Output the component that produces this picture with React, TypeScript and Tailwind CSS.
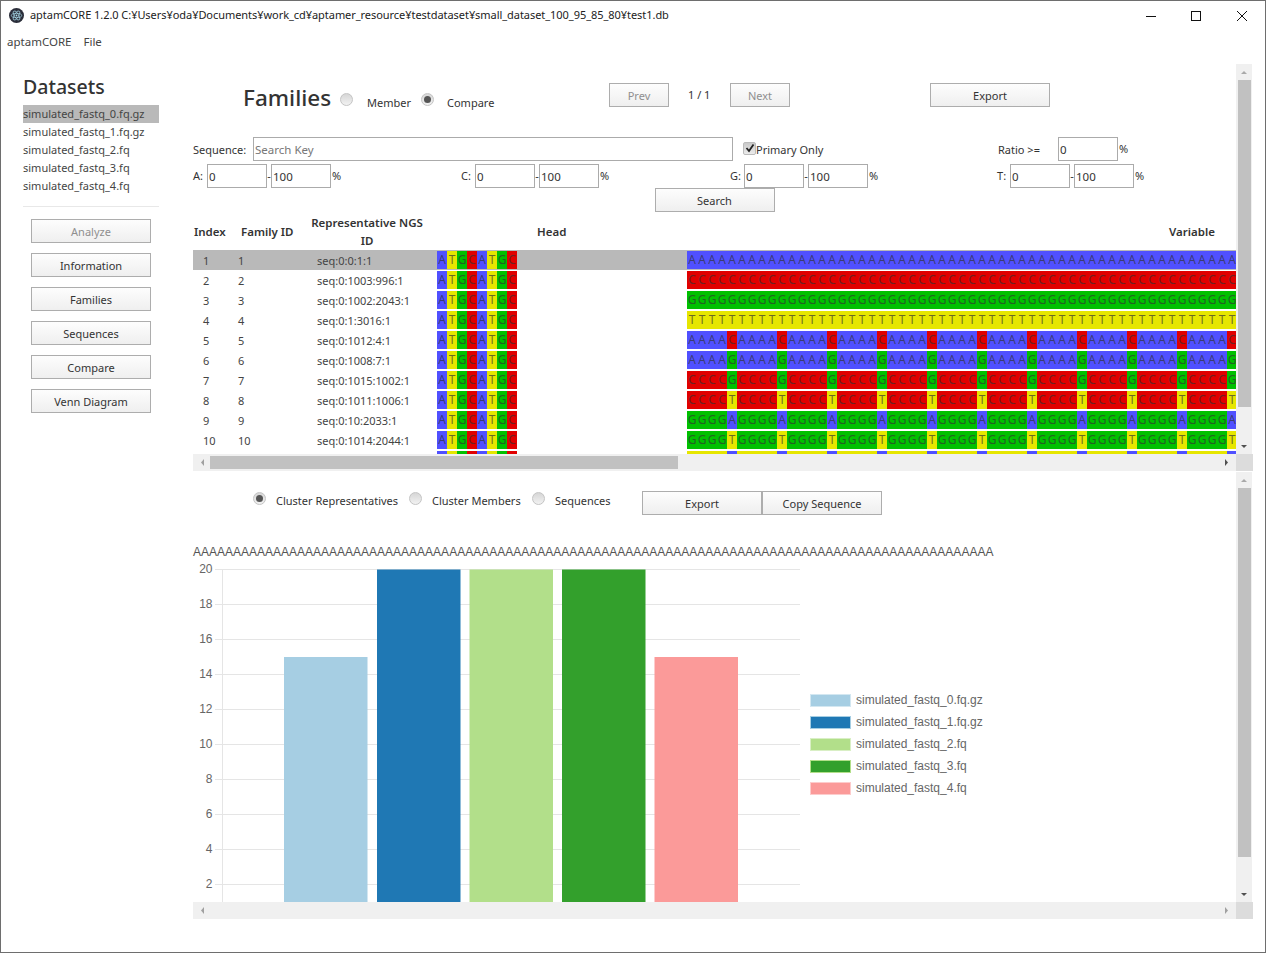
import React from "react";

const FONT = "font-['Noto_Sans','Open_Sans',sans-serif]";
const COL: Record<string, string> = { A: "bg-[#5050ff]", T: "bg-[#e6e600]", G: "bg-[#00c000]", C: "bg-[#e00000]" };

function Btn({ label, w = "w-[120px]", disabled = false }: { label: string; w?: string; disabled?: boolean }) {
  return (
    <div className={`${w} h-6 shrink-0 flex items-center justify-center pt-[2px] border border-[#adadad] bg-gradient-to-b from-[#fdfdfd] to-[#efefef] text-[11px] ${disabled ? "text-[#8f8f8f]" : "text-[#333]"}`}>
      {label}
    </div>
  );
}
function Field({ value, w = "w-[60px]", ph = false }: { value: string; w?: string; ph?: boolean }) {
  return (
    <div className={`${w} h-6 shrink-0 border border-[#ababab] bg-white pl-[1px] pt-px flex items-center text-[11.5px] ${ph ? "text-[#777]" : "text-[#333]"}`}>
      {value}
    </div>
  );
}
function Radio({ on = false, className = "" }: { on?: boolean; className?: string }) {
  return (
    <div className={`w-[13px] h-[13px] shrink-0 rounded-full border border-[#c4c4c4] bg-gradient-to-b from-[#d6d6d6] to-[#f2f2f2] flex items-center justify-center ${className}`}>
      {on && <div className="w-[7px] h-[7px] rounded-full bg-[#555]" />}
    </div>
  );
}
function Range({ letter, labelW }: { letter: string; labelW: string }) {
  return (
    <div className="flex items-center text-[11px] text-[#333]">
      <span className={labelW}>{letter}:</span>
      <Field value="0" />
      <span className="w-1 text-center">-</span>
      <Field value="100" />
      <span className="ml-px">%</span>
    </div>
  );
}
function Seq({ s, w }: { s: string; w: number }) {
  const cells = Array.from({ length: w }, (_, i) => s[i % s.length]);
  return (
    <div className="flex h-[18px] shrink-0">
      {cells.map((c, i) => (
        <span key={i} className={`w-[10px] h-[18px] shrink-0 flex items-center justify-center text-xs text-[#333]/70 ${COL[c]}`}>
          {c}
        </span>
      ))}
    </div>
  );
}
const ROWS: [string, string][] = [
  ["seq:0:0:1:1", "A"],
  ["seq:0:1003:996:1", "C"],
  ["seq:0:1002:2043:1", "G"],
  ["seq:0:1:3016:1", "T"],
  ["seq:0:1012:4:1", "AAAAC"],
  ["seq:0:1008:7:1", "AAAAG"],
  ["seq:0:1015:1002:1", "CCCCG"],
  ["seq:0:1011:1006:1", "CCCCT"],
  ["seq:0:10:2033:1", "GGGGA"],
  ["seq:0:1014:2044:1", "GGGGT"],
  ["seq:0:1013:2045:1", "TTTTA"],
];
function Row({ i, id, v }: { i: number; id: string; v: string }) {
  return (
    <div className={`flex items-center h-5 shrink-0 text-[11px] text-[#444] ${i === 1 ? "bg-[#b9b9b9]" : ""}`}>
      <span className="w-[45px] shrink-0 pl-[10px] pt-[2px]">{i}</span>
      <span className="w-[79px] shrink-0 pt-[2px]">{i}</span>
      <span className="w-[120px] shrink-0 pt-[2px]">{id}</span>
      <Seq s="ATGCATGC" w={8} />
      <div className="w-[170px] shrink-0" />
      <Seq s={v} w={55} />
    </div>
  );
}
function VScroll({ thumbH }: { thumbH: string }) {
  return (
    <div className="flex-1 w-4 bg-[#f0f0f0] flex flex-col items-center">
      <svg width="16" height="16" className="shrink-0"><path d="M5 10 L8 7 L11 10 Z" fill="#a9a9a9" /></svg>
      <div className={`w-[13px] bg-[#c1c1c1] ${thumbH}`} />
      <div className="flex-1" />
      <svg width="16" height="16" className="shrink-0"><path d="M5 7 L8 10 L11 7 Z" fill="#505050" /></svg>
    </div>
  );
}
function HScroll({ thumb = false }: { thumb?: boolean }) {
  return (
    <div className="h-[17px] bg-[#f0f0f0] flex items-center shrink-0">
      <svg width="17" height="17" className="shrink-0"><path d="M11 5 L8 8.5 L11 12 Z" fill="#a0a0a0" /></svg>
      {thumb && <div className="w-[468px] h-[13px] bg-[#c1c1c1]" />}
      <div className="flex-1" />
      <svg width="17" height="17" className="shrink-0"><path d="M6 5 L9 8.5 L6 12 Z" fill={thumb ? "#505050" : "#a0a0a0"} /></svg>
    </div>
  );
}
const BARS = [
  { x: 284, v: 15, c: "#a6cee3" },
  { x: 377, v: 20, c: "#1f78b4" },
  { x: 469.5, v: 20, c: "#b2df8a" },
  { x: 562, v: 20, c: "#33a02c" },
  { x: 654.5, v: 15, c: "#fb9a99" },
];
const LEGEND = [
  ["simulated_fastq_0.fq.gz", "bg-[#a6cee3] border-[#d3e7f1]"],
  ["simulated_fastq_1.fq.gz", "bg-[#1f78b4] border-[#a6cee3]"],
  ["simulated_fastq_2.fq", "bg-[#b2df8a] border-[#d9efc5]"],
  ["simulated_fastq_3.fq", "bg-[#33a02c] border-[#b2df8a]"],
  ["simulated_fastq_4.fq", "bg-[#fb9a99] border-[#fdcccc]"],
];
function Chart() {
  const ox = 193, oy = 560;
  const ticks = [20, 18, 16, 14, 12, 10, 8, 6, 4, 2];
  const y = (v: number) => 569.5 + (20 - v) * 17.5 - oy;
  return (
    <svg width="617" height="342" className="shrink-0 block">
      <line x1={222.5 - ox} x2={222.5 - ox} y1={y(20)} y2="342" stroke="#e5e5e5" />
      {ticks.map((t) => (
        <g key={t}>
          <line x1={215 - ox} x2={800 - ox} y1={y(t)} y2={y(t)} stroke="#e5e5e5" />
          <text x={212.5 - ox} y={y(t) + 3} textAnchor="end" fontSize="12" fill="#666" fontFamily="'Liberation Sans',sans-serif">{t}</text>
        </g>
      ))}
      {BARS.map((b) => (
        <rect key={b.x} x={b.x - ox} y={y(b.v)} width="83.5" height={342 - y(b.v)} fill={b.c} />
      ))}
    </svg>
  );
}
function AppIcon() {
  return (
    <svg width="15" height="15" viewBox="0 0 15 15" className="shrink-0">
      <circle cx="7.5" cy="7.5" r="7.5" fill="#2b2e3a" />
      <g fill="none" stroke="#a8d8e8" strokeWidth="0.7">
        <ellipse cx="7.5" cy="7.5" rx="5.2" ry="2.1" />
        <ellipse cx="7.5" cy="7.5" rx="5.2" ry="2.1" transform="rotate(60 7.5 7.5)" />
        <ellipse cx="7.5" cy="7.5" rx="5.2" ry="2.1" transform="rotate(120 7.5 7.5)" />
      </g>
      <circle cx="7.5" cy="7.5" r="0.9" fill="#a8d8e8" />
    </svg>
  );
}

export default function App() {
  return (
    <div className={`${FONT} w-[1266px] h-[953px] bg-white border border-[#6e6e6e] flex flex-col overflow-hidden text-[11px] text-[#333]`}>
      {/* title bar */}
      <div className="h-[29px] shrink-0 flex items-center pl-[8px]">
        <AppIcon />
        <span className="ml-[6px] text-[11px] text-[#222] whitespace-nowrap tracking-[-0.05px]">aptamCORE 1.2.0 C:¥Users¥oda¥Documents¥work_cd¥aptamer_resource¥testdataset¥small_dataset_100_95_85_80¥test1.db</span>
        <div className="flex-1" />
        <svg width="10" height="10" className="mr-[35px] shrink-0"><path d="M0 5.5H10" stroke="#111" /></svg>
        <svg width="10" height="10" className="mr-[36px] shrink-0"><rect x="0.5" y="0.5" width="9" height="9" fill="none" stroke="#111" /></svg>
        <svg width="10" height="10" className="mr-[18px] shrink-0"><path d="M0 0L10 10M10 0L0 10" stroke="#111" /></svg>
      </div>
      {/* menu */}
      <div className="h-[24px] shrink-0 flex items-center pl-[6px] gap-3 text-[11.5px] text-[#444]">
        <span>aptamCORE</span>
        <span>File</span>
      </div>
      {/* body */}
      <div className="flex flex-1 min-h-0">
        {/* sidebar */}
        <div className="w-[192px] shrink-0 pl-[22px] pt-[17px]">
          <div className="w-[136px]">
            <div className="h-[34px] text-[19.5px] leading-[32px] font-medium text-[#333]">Datasets</div>
            {["simulated_fastq_0.fq.gz", "simulated_fastq_1.fq.gz", "simulated_fastq_2.fq", "simulated_fastq_3.fq", "simulated_fastq_4.fq"].map((d, i) => (
              <div key={d} className={`h-[18px] leading-[18px] text-[11px] text-[#444] ${i === 0 ? "bg-[#b9b9b9]" : ""}`}>{d}</div>
            ))}
            <div className="h-px bg-[#e8e8e8] mt-[11px]" />
            <div className="pl-2 pt-3 flex flex-col gap-[10px]">
              <Btn label="Analyze" disabled />
              <Btn label="Information" />
              <Btn label="Families" />
              <Btn label="Sequences" />
              <Btn label="Compare" />
              <Btn label="Venn Diagram" />
            </div>
          </div>
        </div>
        {/* main */}
        <div className="w-[1060px] shrink-0 flex flex-col pt-[10px]">
          {/* top panel */}
          <div className="h-[407px] shrink-0 flex">
            <div className="w-[1043px] shrink-0 flex flex-col">
              <div className="h-[43px] flex items-end shrink-0">
                <div className="flex items-center h-[24px]">
                  <span className="ml-[50px] w-[97px] text-[22.5px] leading-[24px] font-medium text-[#333] translate-y-[3px]">Families</span>
                  <Radio className="translate-y-[4px]" />
                  <span className="ml-[8px] pl-[6px] w-[60px] translate-y-[8px]">Member</span>
                  <Radio on className="translate-y-[4px]" />
                  <span className="ml-[7px] pl-[6px] w-[168px] translate-y-[8px]">Compare</span>
                  <Btn label="Prev" w="w-[60px]" disabled />
                  <span className="ml-[19px] w-[42px] pt-px">1 / 1</span>
                  <Btn label="Next" w="w-[60px]" disabled />
                  <div className="w-[140px]" />
                  <Btn label="Export" />
                </div>
              </div>
              <div className="flex items-center mt-[30px] h-6 shrink-0">
                <span className="w-[60px] pt-[2px]">Sequence:</span>
                <Field value="Search Key" w="w-[480px]" ph />
                <div className="ml-[10px] w-[13px] h-[13px] rounded-[2px] border border-[#bbb] bg-gradient-to-b from-[#c8c8c8] to-[#ececec] flex items-center justify-center shrink-0 -translate-y-[1px]">
                  <svg width="10" height="10"><path d="M1.5 5L4 8L8.5 1.5" fill="none" stroke="#222" strokeWidth="1.8" /></svg>
                </div>
                <span className="w-[242px] pt-[2px]">Primary Only</span>
                <span className="w-[60px] pt-[2px]">Ratio &gt;=</span>
                <Field value="0" />
                <span className="ml-px">%</span>
              </div>
              <div className="grid grid-cols-[268px_269px_267px_1fr] mt-[3px] shrink-0">
                <Range letter="A" labelW="w-[14px]" />
                <Range letter="C" labelW="w-[14px]" />
                <Range letter="G" labelW="w-[14px]" />
                <Range letter="T" labelW="w-[13px]" />
              </div>
              <div className="flex justify-center shrink-0">
                <Btn label="Search" />
              </div>
              {/* table header */}
              <div className="flex items-center h-[38px] shrink-0 font-semibold text-[11.5px] text-[#333]">
                <span className="w-[48px] pl-[1px] pt-px">Index</span>
                <span className="w-[69px] pt-px">Family ID</span>
                <span className="w-[114px] text-center leading-[18px] pt-[2px]">Representative NGS ID</span>
                <span className="ml-[15px] w-[190px] pl-[98px] pt-px">Head</span>
                <div className="flex-1" />
                <span className="mr-[21px] pt-px">Variable</span>
              </div>
              <div className="h-[204px] overflow-hidden flex flex-col shrink-0">
                {ROWS.map(([id, v], i) => (
                  <Row key={i} i={i + 1} id={id} v={v} />
                ))}
              </div>
              <HScroll thumb />
            </div>
            <div className="w-[17px] shrink-0 flex flex-col">
              <VScroll thumbH="h-[327px]" />
              <div className="h-[17px] bg-[#dcdcdc] shrink-0" />
            </div>
          </div>
          {/* bottom panel */}
          <div className="h-[447px] mt-[1px] shrink-0 flex">
            <div className="w-[1043px] shrink-0 flex flex-col">
              <div className="flex items-center h-6 mt-[19px] shrink-0">
                <div className="ml-[60px] -translate-y-[5px]"><Radio on /></div>
                <span className="ml-[10px] w-[133px] -translate-y-[2px]">Cluster Representatives</span>
                <Radio className="-translate-y-[5px]" />
                <span className="ml-[10px] w-[100px] -translate-y-[2px]">Cluster Members</span>
                <Radio className="-translate-y-[5px]" />
                <span className="ml-[10px] w-[87px] -translate-y-[2px]">Sequences</span>
                <Btn label="Export" />
                <Btn label="Copy Sequence" />
              </div>
              <div className="mt-[29px] h-[16px] shrink-0 font-['Liberation_Sans',sans-serif] text-xs leading-[16px] text-[#555] whitespace-nowrap">
                {"A".repeat(100)}
              </div>
              <div className="flex h-[342px] shrink-0 overflow-hidden">
                <Chart />
                <div className="pt-[133px] flex flex-col gap-2 font-['Liberation_Sans',sans-serif] text-xs text-[#666]">
                  {LEGEND.map(([t, c]) => (
                    <div key={t} className="flex items-center h-[14px]">
                      <div className={`w-[41px] h-[13px] border shrink-0 ${c}`} />
                      <span className="ml-[5px]">{t}</span>
                    </div>
                  ))}
                </div>
              </div>
              <HScroll />
            </div>
            <div className="w-[17px] shrink-0 flex flex-col">
              <VScroll thumbH="h-[369px]" />
              <div className="h-[17px] bg-[#dcdcdc] shrink-0" />
            </div>
          </div>
        </div>
      </div>
    </div>
  );
}
